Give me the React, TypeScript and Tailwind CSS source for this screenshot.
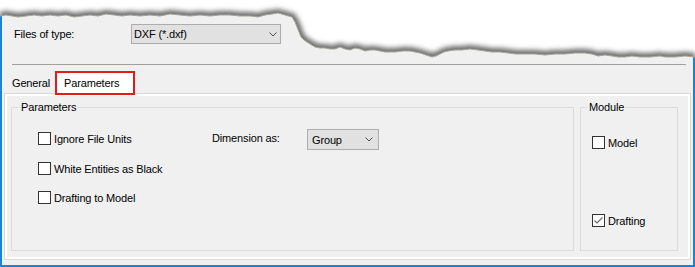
import React from "react";

// jagged top of the cropped screenshot
const EDGE: [number, number][] = [
  [0, 16], [6, 15], [12, 16], [18, 17], [26, 16], [34, 15], [42, 16], [50, 15], [58, 16], [66, 15],
  [74, 17], [82, 16], [90, 15], [98, 16], [106, 14], [114, 15], [122, 16], [130, 15], [140, 16],
  [150, 15], [160, 16], [170, 14], [180, 15], [190, 16], [200, 15], [210, 16], [220, 15], [230, 15],
  [240, 16], [250, 16], [258, 17], [265, 15], [272, 14], [278, 13], [285, 15], [292, 17], [295, 22],
  [297, 27], [299, 32], [301, 37], [304, 40], [307, 42], [310, 44], [315, 47], [320, 48], [325, 48],
  [330, 49], [335, 49], [340, 47], [345, 49], [350, 50], [355, 48], [360, 49], [365, 51], [370, 50],
  [375, 50], [380, 51], [385, 52], [395, 52], [403, 51], [410, 51], [415, 52], [420, 53], [426, 55],
  [432, 57], [436, 56], [440, 54], [444, 52], [448, 51], [455, 50], [462, 50], [470, 49], [478, 50],
  [485, 51], [492, 52], [500, 52], [508, 53], [516, 54], [525, 54], [535, 54], [545, 55], [555, 54],
  [565, 54], [575, 53], [585, 53], [592, 54], [598, 56], [605, 55], [612, 56], [618, 57], [625, 57],
  [632, 56], [640, 57], [650, 57], [660, 56], [665, 57], [675, 57], [685, 56], [695, 57],
];

const edgeStr = EDGE.map(([x, y]) => `${x},${y}`).join(" ");
const paperStr = `0,0 695,0 ${[...EDGE].reverse().map(([x, y]) => `${x},${y}`).join(" ")}`;

function TornEdge() {
  return (
    <svg width="695" height="70" className="absolute top-0 left-0 pointer-events-none">
      <defs>
        <clipPath id="paper">
          <polygon points={paperStr} />
        </clipPath>
        <filter id="soft" x="-5%" y="-60%" width="110%" height="220%">
          <feGaussianBlur stdDeviation="2.5" />
        </filter>
      </defs>
      <polygon points={paperStr} fill="#ffffff" />
      <g clipPath="url(#paper)">
        <polyline points={edgeStr} fill="none" stroke="#6a6a6a" strokeWidth="8" filter="url(#soft)" />
      </g>
      <polyline points={edgeStr} fill="none" stroke="#a6a69a" strokeWidth="1" />
    </svg>
  );
}

function Chevron() {
  return (
    <svg width="8" height="5" viewBox="0 0 8 5">
      <path d="M0.5 0.5 L4 4 L7.5 0.5" fill="none" stroke="#505050" strokeWidth="1" />
    </svg>
  );
}

function Combo({ value, className }: { value: string; className: string }) {
  return (
    <div className={`flex items-center justify-between border border-[#adadad] bg-[#e1e1e1] leading-[14px] ${className}`}>
      <span>{value}</span>
      <Chevron />
    </div>
  );
}

function Check({ label, checked = false, className = "" }: { label: string; checked?: boolean; className?: string }) {
  return (
    <div className={`flex items-center h-[13px] gap-[3px] ${className}`}>
      <div className="w-[13px] h-[13px] border border-[#333333] bg-white flex items-center justify-center">
        {checked && (
          <svg width="11" height="11" viewBox="0 0 11 11">
            <polyline points="1.5,5.5 4,8 9.5,2.5" fill="none" stroke="#6b6b6b" strokeWidth="1.2" />
          </svg>
        )}
      </div>
      <span className="leading-[14px] whitespace-nowrap">{label}</span>
    </div>
  );
}

function GroupBox({ title, titleLeft, className, children }: { title: string; titleLeft: string; className: string; children: React.ReactNode }) {
  return (
    <div className={`relative border border-[#dcdcdc] h-[144px] ${className}`}>
      <span className={`absolute -top-[8px] ${titleLeft} px-[2px] bg-[#f0f0f0] leading-[14px]`}>{title}</span>
      {children}
    </div>
  );
}

export default function App() {
  return (
    <div
      className="relative w-[695px] h-[267px] overflow-hidden bg-white text-[11px] tracking-[-0.15px] text-black"
      style={{ fontFamily: '"Liberation Sans", Arial, sans-serif' }}
    >
      <div className="w-full h-full bg-[#f0f0f0] border-x-2 border-b-2 border-[#1883d7] flex flex-col">
        <div className="flex items-center pt-[24px] pl-[12px]">
          <span className="w-[117px] leading-[14px]">Files of type:</span>
          <Combo value="DXF (*.dxf)" className="w-[150px] h-[20px] pl-[2px] pr-[3px]" />
        </div>

        <div className="mt-[20px] ml-[10px] mr-[7px] h-px bg-[#a0a0a0]" />

        <div className="flex mt-[6px] h-[24px]">
          <div className="w-[53px] pl-[10px] flex items-center">General</div>
          <div className="relative z-10 w-[80px] h-[24px] border-2 border-[#e51b1b] bg-white pl-[7px] flex items-center">
            Parameters
          </div>
        </div>

        <div className="-mt-[2px] ml-[2px] w-[687px] h-[167px] border border-[#d9d9d9]">
          <div className="h-full border-2 border-white flex pl-[4px] pt-[11px] gap-[6px]">
            <GroupBox title="Parameters" titleLeft="left-[7px]" className="w-[563px]">
              <div className="flex pl-[26px] pt-[21px]">
                <div className="w-[174px] flex flex-col pt-[3px] gap-[16px]">
                  <Check label="Ignore File Units" />
                  <Check label="White Entities as Black" className="mt-[1px]" />
                  <Check label="Drafting to Model" />
                </div>
                <div className="flex items-start">
                  <span className="w-[95px] pt-[2px] leading-[14px]">Dimension as:</span>
                  <Combo value="Group" className="w-[72px] h-[21px] pl-[4px] pr-[5px]" />
                </div>
              </div>
            </GroupBox>
            <GroupBox title="Module" titleLeft="left-[6px]" className="w-[98px]">
              <div className="flex flex-col pl-[11px] pt-[28px]">
                <Check label="Model" />
                <Check label="Drafting" checked className="mt-[65px]" />
              </div>
            </GroupBox>
          </div>
        </div>
      </div>
      <TornEdge />
    </div>
  );
}
